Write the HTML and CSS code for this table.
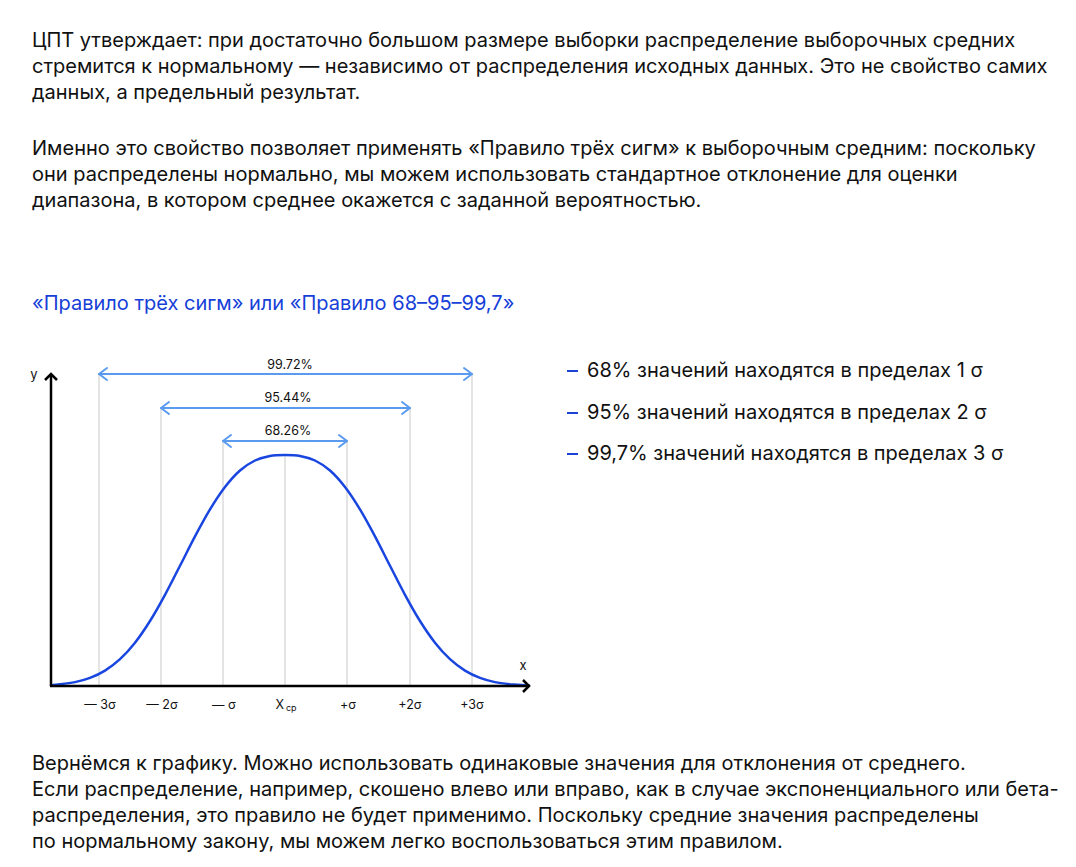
FILE: index.html
```html
<!DOCTYPE html>
<html lang="ru">
<head>
<meta charset="utf-8">
<title>Правило трёх сигм</title>
<link rel="stylesheet" href="styles.css">
</head>
<body>
<main class="page">
  <p class="text">ЦПТ утверждает: при достаточно большом размере выборки распределение выборочных средних стремится к нормальному — независимо от распределения исходных данных. Это не свойство самих данных, а предельный результат.</p>
  <p class="text text-gap">Именно это свойство позволяет применять «Правило трёх сигм» к выборочным средним: поскольку они распределены нормально, мы можем использовать стандартное отклонение для оценки диапазона, в котором среднее окажется с заданной вероятностью.</p>

  <h2 class="heading">«Правило трёх сигм» или «Правило 68–95–99,7»</h2>

  <section class="chart-row">
    <svg class="chart" width="520" height="375" viewBox="32 350 520 375" aria-label="Нормальное распределение">
      <g class="grid">
        <line x1="99" y1="374" x2="99" y2="686"/>
        <line x1="472" y1="374" x2="472" y2="686"/>
        <line x1="161" y1="408" x2="161" y2="686"/>
        <line x1="410" y1="408" x2="410" y2="686"/>
        <line x1="223" y1="441" x2="223" y2="686"/>
        <line x1="347" y1="441" x2="347" y2="686"/>
        <line x1="285" y1="455" x2="285" y2="686"/>
      </g>
      <g class="range">
        <line x1="99" y1="374" x2="472" y2="374"/>
        <polyline points="107,368 99,374 107,380"/>
        <polyline points="464,368 472,374 464,380"/>
        <line x1="161" y1="408" x2="410" y2="408"/>
        <polyline points="169,402 161,408 169,414"/>
        <polyline points="402,402 410,408 402,414"/>
        <line x1="223" y1="441" x2="347" y2="441"/>
        <polyline points="231,435 223,441 231,447"/>
        <polyline points="339,435 347,441 339,447"/>
      </g>
      <g class="label">
        <text x="290" y="369">99.72%</text>
        <text x="288" y="402">95.44%</text>
        <text x="288" y="435">68.26%</text>
      </g>
      <path class="curve" d="M51,685.2 L60,684.2 C65,683.67 70,683.15 75,682.1 C80,681.05 85,679.82 90,677.9 C95,675.98 100,673.72 105,670.6 C110,667.48 115,663.85 120,659.2 C125,654.55 130,649.07 135,642.7 C140,636.33 145,628.98 150,621 C155,613.02 160,604 165,594.8 C170,585.6 175,575.53 180,565.8 C185,556.07 190,545.8 195,536.4 C200,527 205,517.63 210,509.4 C215,501.17 220,493.48 225,487 C230,480.52 235,474.92 240,470.5 C245,466.08 250,462.93 255,460.5 C260,458.07 265,456.82 270,455.9 C275,454.98 280,455 285,455 C290,455 295,454.98 300,455.9 C305,456.82 310,458.07 315,460.5 C320,462.93 325,466.08 330,470.5 C335,474.92 340,480.52 345,487 C350,493.48 355,501.17 360,509.4 C365,517.63 370,527 375,536.4 C380,545.8 385,556.07 390,565.8 C395,575.53 400,585.6 405,594.8 C410,604 415,613.02 420,621 C425,628.98 430,636.33 435,642.7 C440,649.07 445,654.55 450,659.2 C455,663.85 460,667.48 465,670.6 C470,673.72 475,675.98 480,677.9 C485,679.82 490,681.05 495,682.1 C500,683.15 505,683.67 510,684.2 L525,685.3 L529,685.5"/>
      <g class="axis">
        <line x1="51" y1="374" x2="51" y2="686"/>
        <line x1="50" y1="686" x2="529" y2="686"/>
        <polyline points="45,380 51,374 57,380"/>
        <polyline points="523,680 529,686 523,692"/>
      </g>
      <text class="axis-name" x="34" y="379">y</text>
      <text class="axis-name" x="523" y="670">x</text>
      <g class="tick">
        <text x="100" y="709">— 3σ</text>
        <text x="162" y="709">— 2σ</text>
        <text x="224" y="709">— σ</text>
        <text x="286" y="709">X<tspan class="sub" dx="2" dy="2">ср</tspan></text>
        <text x="348" y="709">+σ</text>
        <text x="410" y="709">+2σ</text>
        <text x="472" y="709">+3σ</text>
      </g>
    </svg>

    <ul class="rules">
      <li class="rule">68% значений находятся в пределах 1 σ</li>
      <li class="rule">95% значений находятся в пределах 2 σ</li>
      <li class="rule">99,7% значений находятся в пределах 3 σ</li>
    </ul>
  </section>

  <p class="text bottom">Вернёмся к графику. Можно использовать одинаковые значения для отклонения от среднего.<br>Если распределение, например, скошено влево или вправо, как в случае экспоненциального или бета-распределения, это правило не будет применимо. Поскольку средние значения распределены<br>по нормальному закону, мы можем легко воспользоваться этим правилом.</p>
</main>
</body>
</html>
```

FILE: styles.css
```css
* {
  box-sizing: border-box;
}

html, body {
  margin: 0;
  padding: 0;
  background: #ffffff;
}

body {
  font-family: Inter, "Noto Sans", "Liberation Sans", sans-serif;
  color: #111111;
}

.page {
  padding: 27px 12px 0 32px;
}

.text {
  margin: 0;
  font-size: 20px;
  line-height: 26px;
  letter-spacing: 0;
  max-width: 1030px;
}

.text-gap {
  margin-top: 30px;
}

.heading {
  margin: 77px 0 0;
  font-size: 20px;
  line-height: 26px;
  font-weight: 400;
  letter-spacing: 0;
  color: #1640d8;
}

.chart-row {
  display: flex;
  align-items: flex-start;
  gap: 15px;
  margin-top: 34px;
}

.chart {
  display: block;
  flex: none;
  overflow: visible;
}

.grid line {
  stroke: #e4e4e4;
  stroke-width: 2;
}

.range line,
.range polyline {
  stroke: #5a9bf0;
  stroke-width: 2;
  fill: none;
  stroke-linecap: round;
  stroke-linejoin: round;
}

.curve {
  fill: none;
  stroke: #1a46e0;
  stroke-width: 2.5;
  stroke-linejoin: round;
  stroke-linecap: round;
}

.axis line,
.axis polyline {
  stroke: #000000;
  stroke-width: 2.5;
  fill: none;
  stroke-linecap: butt;
  stroke-linejoin: miter;
}

.label text,
.tick text {
  font-family: Inter, "Liberation Sans", sans-serif;
  font-size: 12.5px;
  fill: #111111;
  text-anchor: middle;
}

.tick .sub {
  font-size: 9px;
}

.axis-name {
  font-family: Inter, "Liberation Sans", sans-serif;
  font-size: 13px;
  fill: #111111;
  text-anchor: middle;
}

.rules {
  list-style: none;
  margin: 0;
  padding: 7px 0 0;
  display: flex;
  flex-direction: column;
  gap: 15.5px;
}

.rule {
  position: relative;
  padding-left: 20px;
  font-size: 20px;
  line-height: 26px;
  letter-spacing: 0;
  white-space: nowrap;
}

.rule::before {
  content: "";
  position: absolute;
  left: 0;
  top: 13px;
  width: 11px;
  height: 2px;
  background: #1a43d6;
}

.bottom {
  margin-top: 25px;
}
```
